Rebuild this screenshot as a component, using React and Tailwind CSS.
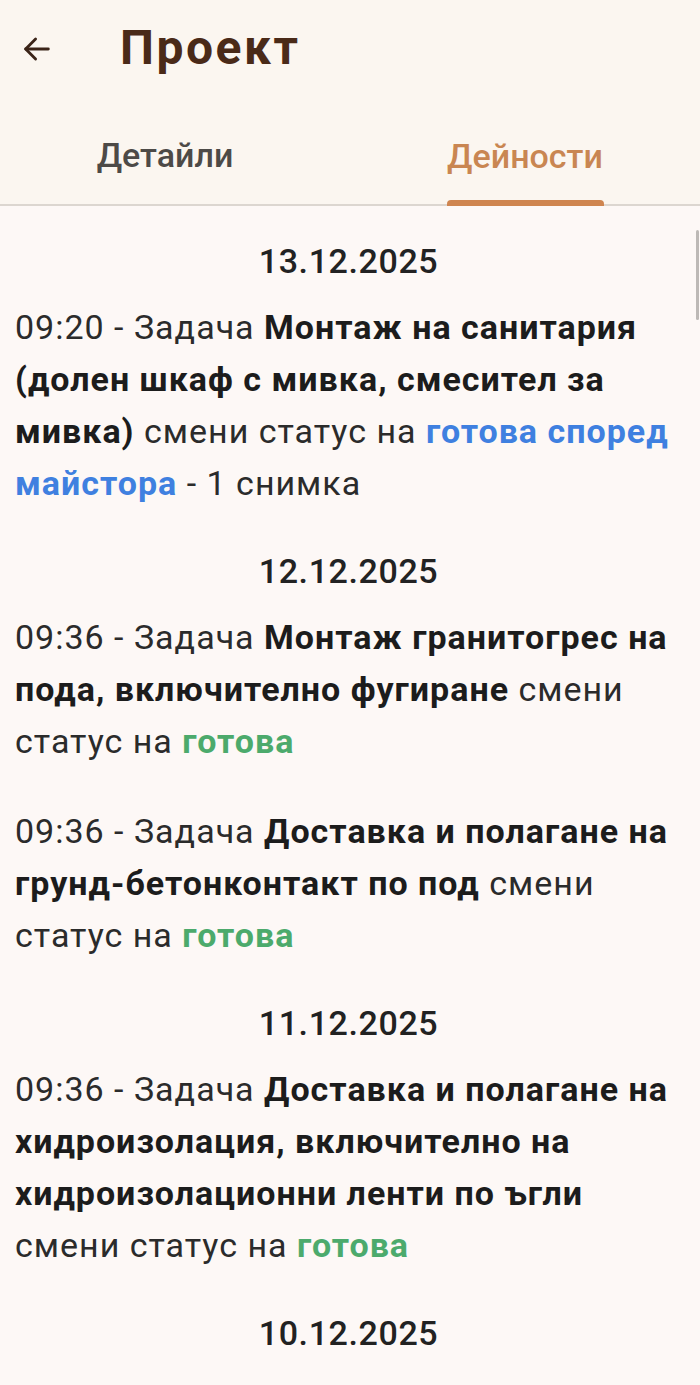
import React from "react";

const B = ({ children }) => <span className="font-bold text-[#1c1c1c]">{children}</span>;
const Blue = ({ children }) => <span className="font-bold text-[#3f80e0]">{children}</span>;
const Green = ({ children }) => <span className="font-bold text-[#4caa6c]">{children}</span>;

function DateRow({ children }) {
  return (
    <div className="text-center text-[34px] tracking-[0.6px] leading-[48px] font-medium text-[#222] mb-[16px] pr-[4px]">
      {children}
    </div>
  );
}

function Entry({ children }) {
  return (
    <p className="text-[34px] tracking-[1px] leading-[52px] text-[#2b2b2b] mb-[38px]">{children}</p>
  );
}

export default function App() {
  return (
    <div
      className="w-[700px] h-[1385px] overflow-hidden bg-[#fdf8f6] relative"
      style={{ fontFamily: "Roboto, 'Noto Sans', sans-serif" }}
    >
      <div className="bg-[#fbf6f0] border-b-[2px] border-[#dcd6d0]">
        <div className="h-[98px] flex items-center">
          <div className="w-[120px] pl-[20px] flex items-center">
            <svg width="34" height="34" viewBox="0 0 24 24" fill="none" stroke="#3b2418" strokeWidth="2" strokeLinecap="round" strokeLinejoin="round">
              <path d="M20 12H4" />
              <path d="M11 5l-7 7 7 7" />
            </svg>
          </div>
          <div className="text-[48px] tracking-[2.5px] font-bold text-[#4a2a18] leading-none -mt-[2px]">Проект</div>
        </div>
        <div className="flex h-[106px]">
          <div className="w-[350px] flex flex-col items-center pr-[20px]">
            <div className="flex-1 flex items-center text-[34px] font-medium text-[#4d4a47] pt-[14px]">Детайли</div>
            <div className="h-[6px]" />
          </div>
          <div className="w-[350px] flex flex-col items-center">
            <div className="flex-1 flex items-center text-[34px] font-medium text-[#c98652] pt-[14px]">Дейности</div>
            <div className="h-[6px] w-[157px] bg-[#cf8550] rounded-t-[4px] -mb-[2px]" />
          </div>
        </div>
      </div>

      <div className="absolute right-[1px] top-[230px] w-[3px] h-[90px] bg-[#bdb9b6] rounded-full" />

      <div className="pt-[31px] pl-[15px] pr-[14px]">
        <DateRow>13.12.2025</DateRow>
        <Entry>
          09:20 - Задача <B>Монтаж на санитария (долен шкаф с мивка, смесител за мивка)</B> смени статус на{" "}
          <Blue>готова според майстора</Blue> - 1 снимка
        </Entry>

        <DateRow>12.12.2025</DateRow>
        <Entry>
          09:36 - Задача <B>Монтаж гранитогрес на пода, включително фугиране</B> смени статус на <Green>готова</Green>
        </Entry>
        <Entry>
          09:36 - Задача <B>Доставка и полагане на грунд-бетонконтакт по под</B> смени статус на <Green>готова</Green>
        </Entry>

        <DateRow>11.12.2025</DateRow>
        <Entry>
          09:36 - Задача <B>Доставка и полагане на хидроизолация, включително на хидроизолационни ленти по ъгли</B> смени статус на{" "}
          <Green>готова</Green>
        </Entry>

        <DateRow>10.12.2025</DateRow>
        <Entry>
          09:36 - Задача <B>Монтаж на</B> ...
        </Entry>
      </div>
    </div>
  );
}
